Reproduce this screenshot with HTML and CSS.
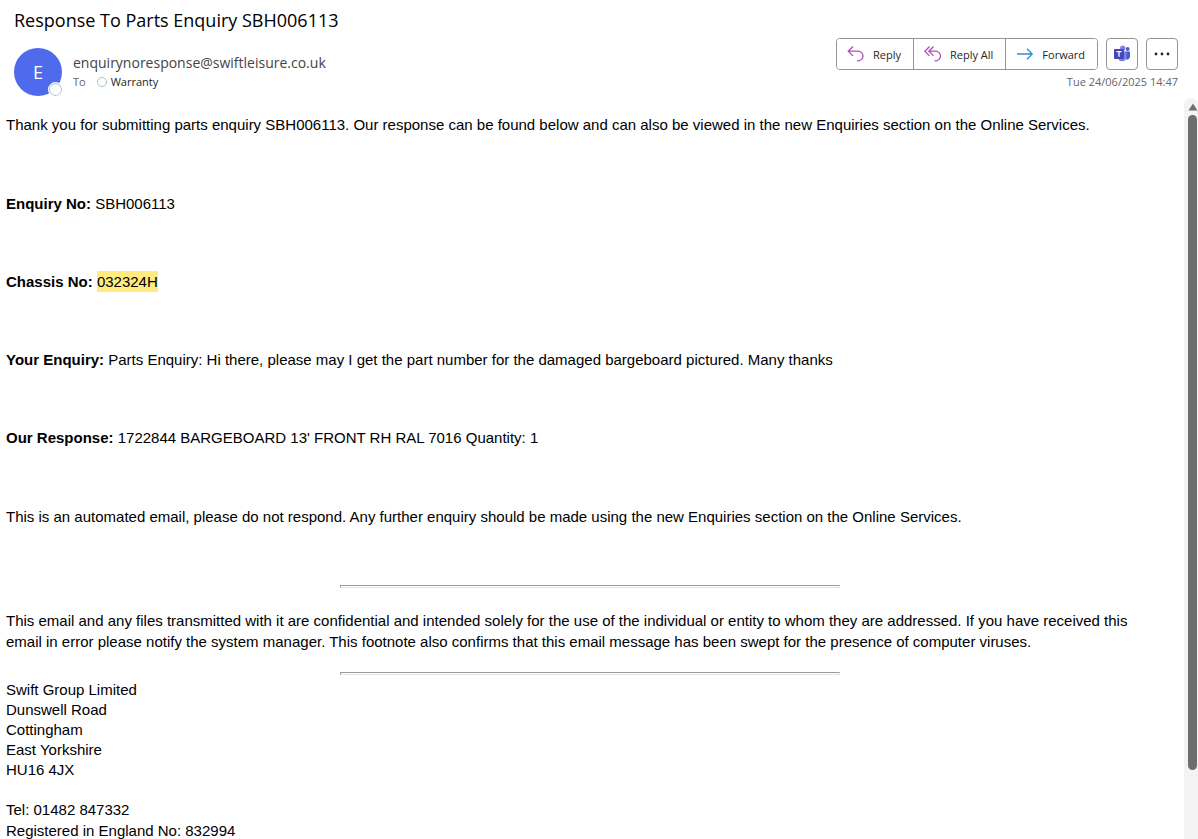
FILE: index.html
```html
<!DOCTYPE html>
<html lang="en">
<head>
    <meta charset="UTF-8">
    <meta name="viewport" content="width=device-width, initial-scale=1.0">
    <title>Response To Parts Enquiry SBH006113</title>
    <link rel="stylesheet" href="styles.css">
</head>
<body>

    <header class="mail-header">
        <h1 class="subject">Response To Parts Enquiry SBH006113</h1>
        <div class="header-row">
            <div class="avatar">E<span class="avatar-status"></span></div>
            <div class="people">
                <div class="sender">enquirynoresponse@swiftleisure.co.uk</div>
                <div class="recipient">
                    <span class="to">To</span>
                    <span class="presence"></span>
                    <span>Warranty</span>
                </div>
            </div>
            <div class="side">
                <div class="actions">
                    <div class="button-group">
                        <button type="button" class="reply">
                            <svg width="18" height="18" viewBox="0 0 18 18" fill="none" stroke="#b04fb8" stroke-width="1.3">
                                <path d="M6 1.5 1.2 6.2 6 10.9M1.2 6.2H11a5 4.8 0 0 1 0 9.6H10"/>
                            </svg>
                            Reply
                        </button>
                        <button type="button" class="reply-all">
                            <svg width="18" height="18" viewBox="0 0 18 18" fill="none" stroke="#b04fb8" stroke-width="1.3">
                                <path d="M5.5 1.5.9 6.2l4.6 4.7M9.5 1.5 4.9 6.2l4.6 4.7M4.9 6.2h6.6a5 4.8 0 0 1 0 9.6h-1"/>
                            </svg>
                            Reply All
                        </button>
                        <button type="button" class="forward">
                            <svg width="18" height="18" viewBox="0 0 18 18" fill="none" stroke="#2b8fd0" stroke-width="1.3">
                                <path d="M1 9h15M11 3.8 16.2 9 11 14.2"/>
                            </svg>
                            Forward
                        </button>
                    </div>
                    <button type="button" class="icon-button" aria-label="Share to Teams">
                        <svg width="18" height="18" viewBox="0 0 18 18">
                            <circle cx="14.7" cy="4" r="1.9" fill="#5059c9"/>
                            <path d="M12 6.6h5v5a3 3 0 0 1-5 2.2z" fill="#5059c9"/>
                            <circle cx="9.8" cy="3.2" r="2.7" fill="#7b83eb"/>
                            <path d="M5 6.6h8.5v5.6a4.4 4.4 0 0 1-8.5 1.3z" fill="#7b83eb"/>
                            <rect x="1" y="4" width="10" height="10" rx="1" fill="#4248b5"/>
                            <path d="M3.5 6.7h5M6 6.7v5" stroke="#fff" stroke-width="1.3"/>
                        </svg>
                    </button>
                    <button type="button" class="icon-button" aria-label="More actions">
                        <svg width="18" height="18" viewBox="0 0 18 18" fill="#262626">
                            <circle cx="3" cy="9" r="1.4"/>
                            <circle cx="9" cy="9" r="1.4"/>
                            <circle cx="15" cy="9" r="1.4"/>
                        </svg>
                    </button>
                </div>
                <time class="date" datetime="2025-06-24T14:47">Tue 24/06/2025 14:47</time>
            </div>
        </div>
    </header>

    <div class="mail-body">
        <main class="message">
            <p class="intro">Thank you for submitting parts enquiry SBH006113. Our response can be found below and can also be viewed in the new Enquiries section on the Online Services.</p>

            <div class="fields">
                <p><b>Enquiry No:</b> SBH006113</p>
                <p><b>Chassis No:</b> <mark>032324H</mark></p>
                <p><b>Your Enquiry:</b> Parts Enquiry: Hi there, please may I get the part number for the damaged bargeboard pictured. Many thanks</p>
                <p><b>Our Response:</b> 1722844 BARGEBOARD 13' FRONT RH RAL 7016 Quantity: 1</p>
            </div>

            <p class="automated">This is an automated email, please do not respond. Any further enquiry should be made using the new Enquiries section on the Online Services.</p>

            <hr>
            <p class="footnote">This email and any files transmitted with it are confidential and intended solely for the use of the individual or entity to whom they are addressed. If you have received this<br>
            email in error please notify the system manager. This footnote also confirms that this email message has been swept for the presence of computer viruses.</p>
            <hr>

            <address>
                Swift Group Limited<br>
                Dunswell Road<br>
                Cottingham<br>
                East Yorkshire<br>
                HU16 4JX
            </address>
            <p class="company">
                Tel: 01482 847332<br>
                Registered in England No: 832994
            </p>
        </main>
        <div class="scrollbar">
            <svg width="10" height="8" viewBox="0 0 10 8" fill="#6e6e6e"><path d="M5 0.5 9.5 7.5h-9z"/></svg>
            <div class="thumb"></div>
        </div>
    </div>

</body>
</html>
```

FILE: styles.css
```css
* { box-sizing: border-box; }
body { margin: 0; height: 100vh; display: flex; flex-direction: column; overflow: hidden; background: #fff; color: #000; font-family: "Liberation Sans", Arial, sans-serif; font-size: 15px; line-height: 21px; }
p { margin: 0; }

.mail-header { padding: 7px 20px 2px 14px; font-family: "Open Sans", "Noto Sans", sans-serif; }
.subject { margin: 0; font-size: 18px; line-height: 26px; font-weight: 400; }
.header-row { display: flex; align-items: flex-start; margin-top: 5px; }
.avatar { position: relative; width: 48px; height: 48px; margin: 10px 11px 0 0; border-radius: 50%; background: #4f6bed; color: #fff; font-size: 18px; line-height: 48px; text-align: center; }
.avatar-status { position: absolute; right: -1px; bottom: -1px; width: 15px; height: 15px; border: 1px solid #fff; border-radius: 50%; background: #fff; box-shadow: inset 0 0 0 1px #a9bfc9; }
.people { flex: 1; padding-top: 15px; color: #444; }
.sender { font-size: 14px; line-height: 20px; }
.recipient { display: flex; align-items: center; font-size: 11px; line-height: 18px; color: #262626; }
.to { color: #666; }
.presence { width: 10px; height: 10px; margin: 0 4px 0 11px; border: 1px solid #a9c3cf; border-radius: 50%; }

.side { display: flex; flex-direction: column; align-items: flex-end; }
.actions { display: flex; gap: 8px; }
.button-group { display: flex; border: 1px solid #949494; border-radius: 4px; }
button { display: flex; align-items: center; gap: 8px; height: 32px; padding: 0 12px 0 10px; border: 1px solid #949494; border-radius: 4px; background: #fff; color: #262626; font-family: inherit; font-size: 11px; cursor: pointer; }
button:hover { background: #f3f3f3; }
.button-group button { height: 30px; border: 0; border-radius: 3px; }
.button-group button + button { border-left: 1px solid #949494; border-radius: 0; }
.button-group button:last-child { border-radius: 0 3px 3px 0; }
.actions .icon-button { width: 32px; padding: 0; justify-content: center; }
.date { margin-top: 3px; color: #666; font-size: 11px; line-height: 18px; }

.mail-body { flex: 1; min-height: 0; display: flex; }
.message { flex: 1; min-width: 0; overflow: hidden; padding: 16px 10px 0 6px; }
.fields { display: flex; flex-direction: column; gap: 57px; margin: 58px 0; }
mark { background: #ffeb7f; color: inherit; padding: 2px 0; }
hr { width: 500px; max-width: 100%; height: 3px; margin: 0 auto; border: 1px solid; border-color: #9a9a9a #e3e3e3 #e3e3e3 #9a9a9a; }
.automated { margin-bottom: 58px; }
.footnote { margin: 22px 0 20px; }
address { margin: 5px 0 19px; font-style: normal; line-height: 20px; }

.scrollbar { width: 14px; display: flex; flex-direction: column; align-items: center; gap: 4px; padding: 5px 0 0 3px; border-radius: 7px 7px 0 0; background: #f3f3f3; }
.scrollbar svg { flex: none; }
.thumb { width: 9px; height: 89%; flex: none; border-radius: 5px; background: #6e6e6e; }
```
